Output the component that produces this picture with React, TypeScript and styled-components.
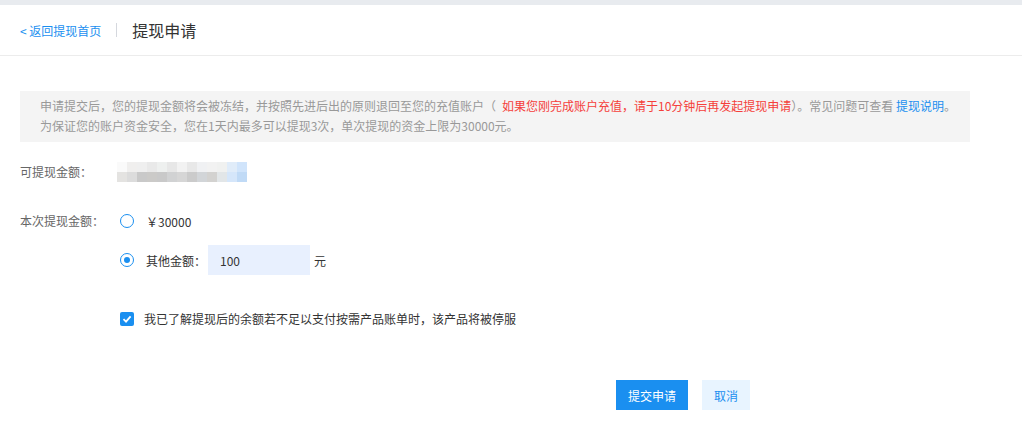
import React, { useState } from 'react';
import styled, { createGlobalStyle } from 'styled-components';

const GlobalStyle = createGlobalStyle`
  body {
    margin: 0;
    background: #fff;
    font-family: "Microsoft YaHei", "Noto Sans CJK SC", "Liberation Sans", sans-serif;
    color: #333;
  }
`;

const Page = styled.div`
  width: 1022px;
  height: 440px;
  border-top: 5px solid #e8ebef;
  box-sizing: border-box;
`;

const Header = styled.div`
  height: 50px;
  display: flex;
  align-items: center;
  padding-left: 20px;
  border-bottom: 1px solid #ececec;
`;

const BackLink = styled.a`
  font-size: 12px;
  color: #1a8ff0;
  text-decoration: none;
  cursor: pointer;
`;

const Divider = styled.span`
  width: 1px;
  height: 14px;
  background: #d5d8de;
  margin: 0 15px 0 15px;
`;

const Title = styled.h1`
  margin: 0;
  font-size: 16px;
  font-weight: 400;
  color: #333;
`;

const Body = styled.div`
  padding: 35px 52px 0 20px;
`;

const Notice = styled.div`
  background: #f4f4f4;
  padding: 5px 0 6px 20px;
  font-size: 12px;
  line-height: 20px;
  color: #999;
  white-space: nowrap;
`;

const Red = styled.span`
  color: #f5403b;
  margin-left: 6px;
`;

const Link = styled.a`
  color: #1a8ff0;
  text-decoration: none;
`;

const Row = styled.div<{ $mt: number; $top?: boolean }>`
  display: flex;
  align-items: ${(p) => (p.$top ? 'flex-start' : 'center')};
  margin-top: ${(p) => p.$mt}px;
`;

const Label = styled.div`
  width: 97px;
  font-size: 12px;
  line-height: 30px;
  color: #666;
`;

const Options = styled.div`
  display: flex;
  flex-direction: column;
  gap: 9px;
`;

const Option = styled.label`
  display: flex;
  align-items: center;
  font-size: 12px;
  color: #333;
  height: 30px;
  cursor: pointer;
`;

const Radio = styled.span<{ $on: boolean }>`
  width: 12px;
  height: 12px;
  border-radius: 50%;
  border: 1px solid #1a8ff0;
  margin: 0 12px 0 3px;
  display: flex;
  align-items: center;
  justify-content: center;
  &::after {
    content: '';
    width: 6px;
    height: 6px;
    border-radius: 50%;
    background: #1a8ff0;
    display: ${(p) => (p.$on ? 'block' : 'none')};
  }
`;

const AmountInput = styled.input`
  width: 102px;
  height: 30px;
  box-sizing: border-box;
  border: none;
  outline: none;
  background: #e8f0fe;
  padding: 0 12px;
  font-size: 12px;
  color: #333;
  font-family: inherit;
  margin: 0 4px 0 2px;
`;

const Check = styled.span`
  width: 14px;
  height: 14px;
  background: #1a8ff0;
  border-radius: 2px;
  display: flex;
  align-items: center;
  justify-content: center;
  margin: 0 10px 0 100px;
`;

const CheckText = styled.span`
  font-size: 12px;
  color: #333;
`;

const Actions = styled.div`
  display: flex;
  gap: 14px;
  margin: 53px 0 0 596px;
`;

const Button = styled.button<{ $primary?: boolean }>`
  height: 30px;
  padding: 0 12px;
  border: none;
  font-size: 12px;
  font-family: inherit;
  cursor: pointer;
  background: ${(p) => (p.$primary ? '#1a8ff0' : '#e8f4ff')};
  color: ${(p) => (p.$primary ? '#fff' : '#1a8ff0')};
`;

const mosaic = [
  ['#fafafa', '#f0efee', '#efefef', '#e9e9e9', '#eef0ef', '#e7e7e7', '#f2f2f2', '#e8e8e8', '#f0f1f3', '#f2f2f2', '#f0f1f0', '#e0ecf9', '#d0e4fb'],
  ['#e4e3e1', '#dcdcdc', '#c9c9c9', '#cbcac8', '#c9c9c9', '#d1d2d3', '#d6d6d6', '#cbcbcb', '#d2d5d8', '#d3d2d0', '#e2e6e8', '#d5e6fa', '#c0daf6'],
];

const Blurred = () => (
  <svg width="130" height="20" viewBox="0 0 130 20">
    {mosaic.map((row, r) =>
      row.map((c, i) => <rect key={`${r}-${i}`} x={i * 10} y={r * 10} width="10" height="10" fill={c} />)
    )}
  </svg>
);

export default function App() {
  const [choice, setChoice] = useState<'max' | 'other'>('other');
  const [amount, setAmount] = useState('100');

  return (
    <Page>
      <GlobalStyle />
      <Header>
        <BackLink>&lt; 返回提现首页</BackLink>
        <Divider />
        <Title>提现申请</Title>
      </Header>
      <Body>
        <Notice>
          申请提交后，您的提现金额将会被冻结，并按照先进后出的原则退回至您的充值账户（
          <Red>如果您刚完成账户充值，请于10分钟后再发起提现申请</Red>）。常见问题可查看 <Link>提现说明</Link>。
          <br />
          为保证您的账户资金安全，您在1天内最多可以提现3次，单次提现的资金上限为30000元。
        </Notice>
        <Row $mt={15}>
          <Label>可提现金额：</Label>
          <Blurred />
        </Row>
        <Row $mt={19} $top>
          <Label>本次提现金额：</Label>
          <Options>
            <Option onClick={() => setChoice('max')}>
              <Radio $on={choice === 'max'} />
              ￥30000
            </Option>
            <Option onClick={() => setChoice('other')}>
              <Radio $on={choice === 'other'} />
              其他金额：
              <AmountInput value={amount} onChange={(e) => setAmount(e.target.value)} />
              元
            </Option>
          </Options>
        </Row>
        <Row $mt={35}>
          <Check>
            <svg width="10" height="10" viewBox="0 0 10 10">
              <path d="M1.5 5.2 L4 7.6 L8.6 2.4" stroke="#fff" strokeWidth="1.8" fill="none" />
            </svg>
          </Check>
          <CheckText>我已了解提现后的余额若不足以支付按需产品账单时，该产品将被停服</CheckText>
        </Row>
        <Actions>
          <Button $primary>提交申请</Button>
          <Button>取消</Button>
        </Actions>
      </Body>
    </Page>
  );
}
